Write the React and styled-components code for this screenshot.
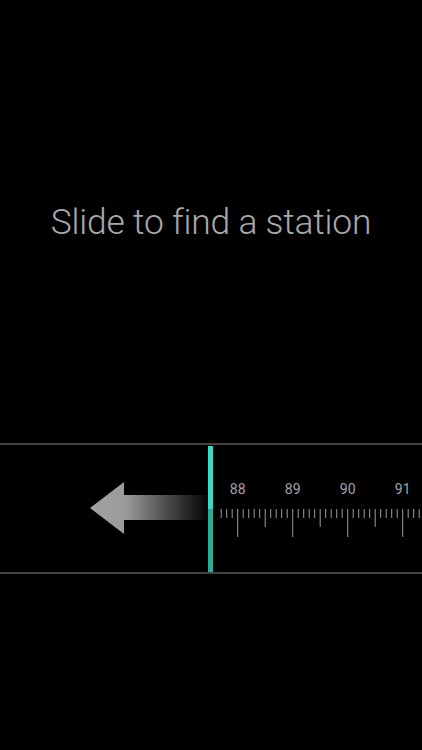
import React from "react";
import styled, { createGlobalStyle } from "styled-components";

const GlobalStyle = createGlobalStyle`
  html, body {
    margin: 0;
    padding: 0;
    background: #000;
  }
  body {
    font-family: Roboto, "Liberation Sans", sans-serif;
  }
`;

const Screen = styled.div`
  width: 422px;
  height: 750px;
  background: #000;
  display: flex;
  flex-direction: column;
  overflow: hidden;
`;

const Hint = styled.div`
  padding-top: 201px;
  height: 42px;
  text-align: center;
  font-family: Roboto, "Liberation Sans", sans-serif;
  font-weight: 300;
  font-size: 35.4px;
  line-height: 42px;
  color: #a9a9a9;
  letter-spacing: -0.2px;
`;

const Dial = styled.div`
  margin-top: 200px;
  height: 127px;
  border-top: 2px solid #444;
  border-bottom: 2px solid #444;
  position: relative;
  display: flex;
  align-items: stretch;
`;

const ArrowSide = styled.div`
  width: 208px;
  display: flex;
  align-items: center;
  justify-content: flex-end;
`;

const Needle = styled.div`
  position: absolute;
  left: 208px;
  top: 1px;
  bottom: 0;
  width: 5px;
  background: linear-gradient(
    to bottom,
    #3cd8c1 0%,
    #3cd8c1 50%,
    #2aac99 50%,
    #2aac99 100%
  );
`;

const Scale = styled.svg`
  flex: 1;
  display: block;
`;

const Label = styled.text`
  font-family: Roboto, "Liberation Sans", sans-serif;
  font-size: 14px;
  fill: #a3a3a3;
`;

const START = 208; // left edge of the scale in page coords
const PX_PER_MHZ = 55;
const BASE_X = 237.7; // 88.0

function Ruler() {
  const ticks = [];
  for (let i = -4; i <= 36; i++) {
    const x = BASE_X + i * (PX_PER_MHZ / 10) - START;
    if (x < 8 || x > 214) continue;
    const step = ((i % 10) + 10) % 10;
    let len = 9;
    if (step === 0) len = 28;
    else if (step === 5) len = 18;
    ticks.push(
      <line
        key={i}
        x1={x}
        x2={x}
        y1={64}
        y2={64 + len}
        stroke="#9c9c9c"
        strokeWidth="1"
      />
    );
  }
  const labels = [88, 89, 90, 91].map((f, idx) => (
    <Label key={f} x={BASE_X + idx * PX_PER_MHZ - START} y={49} textAnchor="middle">
      {f}
    </Label>
  ));
  return (
    <Scale width="214" height="127" viewBox="0 0 214 127">
      {labels}
      {ticks}
    </Scale>
  );
}

function Arrow() {
  return (
    <svg width="124" height="52" viewBox="0 0 124 52">
      <defs>
        <linearGradient id="fade" x1="0" y1="0" x2="1" y2="0">
          <stop offset="0" stopColor="#a2a2a2" />
          <stop offset="0.3" stopColor="#9a9a9a" />
          <stop offset="0.65" stopColor="#4a4a4a" />
          <stop offset="1" stopColor="#000" />
        </linearGradient>
      </defs>
      <path
        d="M0 26 L34 0 L34 13 L120 13 L120 38 L34 38 L34 52 Z"
        fill="url(#fade)"
      />
    </svg>
  );
}

export default function App() {
  return (
    <>
      <GlobalStyle />
      <Screen>
        <Hint>Slide to find a station</Hint>
        <Dial>
          <ArrowSide>
            <div style={{ marginRight: -6, marginTop: 2 }}>
              <Arrow />
            </div>
          </ArrowSide>
          <Ruler />
          <Needle />
        </Dial>
      </Screen>
    </>
  );
}
